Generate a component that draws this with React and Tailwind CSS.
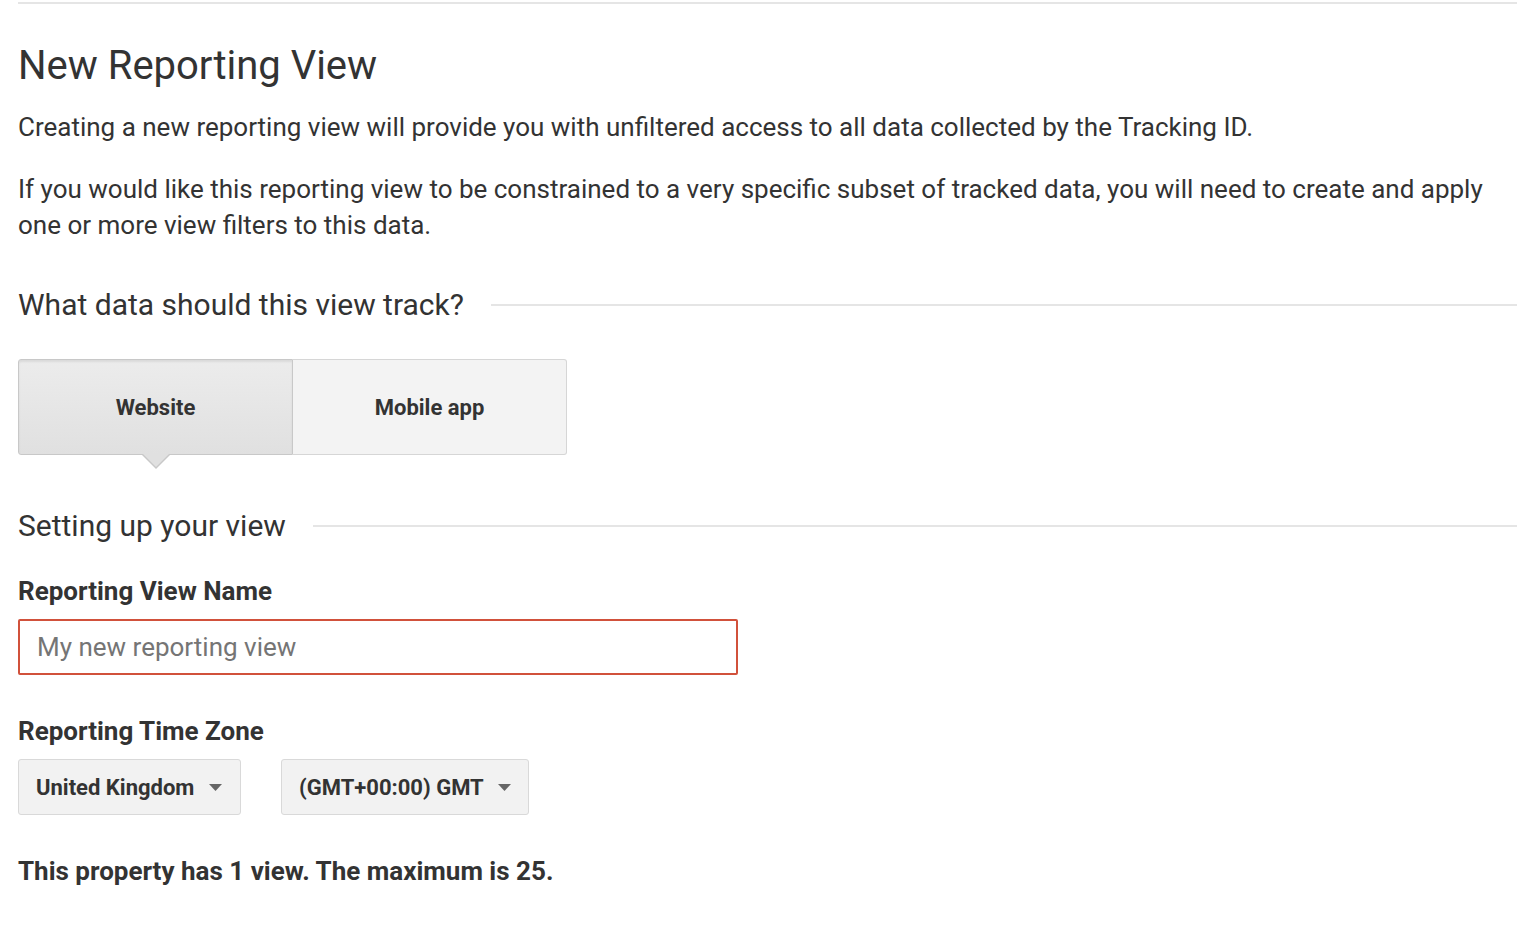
import React from "react";

function Caret() {
  return (
    <svg width="13" height="7" viewBox="0 0 13 7" className="shrink-0">
      <path d="M0 0 L13 0 L6.5 7 Z" fill="#666" />
    </svg>
  );
}

function SectionHeading({ children }) {
  return (
    <div className="flex items-center">
      <h2 className="text-[30px] leading-[36px] text-[#333] whitespace-nowrap">{children}</h2>
      <div className="flex-1 h-[2px] bg-[#e5e5e5] ml-[27px]" />
    </div>
  );
}

export default function App() {
  return (
    <div
      className="w-[1526px] h-[928px] bg-white pl-[18px] pr-[9px] text-[#333]"
      style={{ fontFamily: "Roboto, 'Liberation Sans', sans-serif" }}
    >
      <div className="pt-[2px]">
        <div className="h-[2px] bg-[#e5e5e5]" />
      </div>
      <h1 className="mt-[38px] text-[40px] leading-[48px] font-normal text-[#333]">New Reporting View</h1>
      <p className="mt-[19px] text-[26px] leading-[36px]">
        Creating a new reporting view will provide you with unfiltered access to all data collected by the Tracking ID.
      </p>
      <p className="mt-[26px] text-[26px] leading-[36px] pr-[20px]">
        If you would like this reporting view to be constrained to a very specific subset of tracked data, you will need to create and apply one or more view filters to this data.
      </p>

      <div className="mt-[44px]">
        <SectionHeading>What data should this view track?</SectionHeading>
      </div>

      <div className="mt-[36px] flex">
        <div className="relative">
          <button className="w-[275px] h-[96px] rounded-l-[3px] border border-[#c8c8c8] bg-gradient-to-b from-[#ececec] to-[#e0e0e0] shadow-[inset_0_2px_2px_rgba(0,0,0,0.08)] text-[22px] font-bold text-[#333]">
            Website
          </button>
          <div className="absolute left-[123px] top-[95px] w-0 h-0 border-l-[15px] border-r-[15px] border-t-[15px] border-l-transparent border-r-transparent border-t-[#c8c8c8]" />
          <div className="absolute left-[124px] top-[94px] w-0 h-0 border-l-[14px] border-r-[14px] border-t-[14px] border-l-transparent border-r-transparent border-t-[#e0e0e0]" />
        </div>
        <button className="w-[274px] h-[96px] rounded-r-[3px] border border-l-0 border-[#d6d6d6] bg-[#f3f3f3] text-[22px] font-bold text-[#333]">
          Mobile app
        </button>
      </div>

      <div className="mt-[53px]">
        <SectionHeading>Setting up your view</SectionHeading>
      </div>

      <div className="mt-[31px] text-[26px] leading-[32px] font-bold">Reporting View Name</div>
      <div className="mt-[12px] w-[720px] h-[56px] border-2 border-[#d1513b] rounded-[2px] flex items-center pl-[17px]">
        <input
          className="w-full outline-none text-[26px] text-[#333] placeholder:text-[#757575] bg-transparent"
          placeholder="My new reporting view"
        />
      </div>

      <div className="mt-[40px] text-[26px] leading-[32px] font-bold">Reporting Time Zone</div>
      <div className="mt-[12px] flex gap-[40px]">
        <div className="w-[223px] h-[56px] border border-[#d9d9d9] rounded-[3px] bg-[#f2f2f2] flex items-center justify-between pl-[17px] pr-[18px]">
          <span className="text-[22px] font-bold text-[#333]">United Kingdom</span>
          <Caret />
        </div>
        <div className="w-[248px] h-[56px] border border-[#d9d9d9] rounded-[3px] bg-[#f2f2f2] flex items-center justify-between pl-[17px] pr-[17px]">
          <span className="text-[22px] font-bold text-[#333]">(GMT+00:00) GMT</span>
          <Caret />
        </div>
      </div>

      <div className="mt-[40px] text-[26px] leading-[32px] font-bold">This property has 1 view. The maximum is 25.</div>
    </div>
  );
}
